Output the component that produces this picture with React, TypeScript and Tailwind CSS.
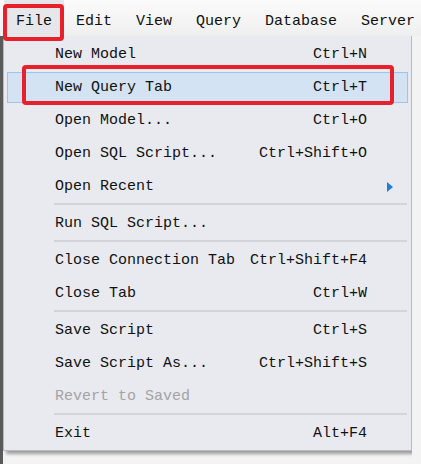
import { Fragment } from "react";

type Item = { label: string; shortcut?: string; disabled?: boolean; submenu?: boolean; active?: boolean };

const groups: Item[][] = [
  [
    { label: "New Model", shortcut: "Ctrl+N" },
    { label: "New Query Tab", shortcut: "Ctrl+T", active: true },
    { label: "Open Model...", shortcut: "Ctrl+O" },
    { label: "Open SQL Script...", shortcut: "Ctrl+Shift+O" },
    { label: "Open Recent", submenu: true },
  ],
  [{ label: "Run SQL Script..." }],
  [
    { label: "Close Connection Tab", shortcut: "Ctrl+Shift+F4" },
    { label: "Close Tab", shortcut: "Ctrl+W" },
  ],
  [
    { label: "Save Script", shortcut: "Ctrl+S" },
    { label: "Save Script As...", shortcut: "Ctrl+Shift+S" },
    { label: "Revert to Saved", disabled: true },
  ],
  [{ label: "Exit", shortcut: "Alt+F4" }],
];

const menus = ["File", "Edit", "View", "Query", "Database", "Server"];

const MenuRow = ({ item }: { item: Item }) => (
  <div className="relative h-[33px] flex items-center pt-[2px]">
    {item.active && (
      <>
        <div className="absolute left-[3px] right-[3px] top-[2px] bottom-0 bg-[#d3e3f3] border border-[#9cc5ee]" />
        <div className="absolute left-[18px] top-[-5px] w-[372px] h-[40px] border-[4px] border-[#e8202a] rounded-[4px]" />
      </>
    )}
    <span className={`relative pl-[51px] ${item.disabled ? "text-[#a3a3a3]" : "text-[#111]"}`}>{item.label}</span>
    {item.shortcut && (
      <span className="relative ml-auto mr-[44px] text-[#111]">{item.shortcut}</span>
    )}
    {item.submenu && (
      <svg className="relative ml-auto mr-[18px]" width="6" height="10" viewBox="0 0 6 10">
        <path d="M0 0 L6 5 L0 10 Z" fill="#1e7fd8" />
      </svg>
    )}
  </div>
);

const App = () => {
  return (
    <div
      className="w-[421px] h-[464px] bg-[#f3f3f3] overflow-hidden flex flex-col text-[15px] leading-none"
      style={{ fontFamily: '"Liberation Mono", "DejaVu Sans Mono", monospace' }}
    >
      {/* Menu bar */}
      <div className="h-[36px] flex items-center pl-[4px] bg-gradient-to-b from-[#fbfbfb] to-[#efefef]">
        {menus.map((m, i) => (
          <div
            key={m}
            className={`relative h-full flex items-center pt-[7px] px-[12px] text-[#111] ${i === 0 ? "bg-[#e6e7eb]" : ""}`}
          >
            {i === 0 && (
              <div className="absolute left-[-1px] top-[4px] w-[61px] h-[37px] border-[4px] border-[#e8202a] rounded-[4px] z-10" />
            )}
            <span className="relative">{m}</span>
          </div>
        ))}
      </div>

      <div className="flex flex-1">
        <div className="w-[3px] bg-[#5a5a5a]" />
        {/* Dropdown */}
        <div className="flex flex-col">
          <div className="w-[409px] h-[415px] bg-[#e9eaef] border border-[#b8b9bd] border-t-0 shadow-[3px_3px_3px_rgba(0,0,0,0.35)] flex flex-col pt-[1px]">
            {groups.map((g, gi) => (
              <Fragment key={gi}>
                {gi > 0 && (
                  <div className="h-[4px] flex items-center pl-[50px] pr-[4px]">
                    <div className="h-[2px] w-full bg-[#d3d4db]" />
                  </div>
                )}
                {g.map((item) => (
                  <MenuRow key={item.label} item={item} />
                ))}
              </Fragment>
            ))}
          </div>
        </div>
        <div className="flex-1 bg-[#f3f3f3]" />
      </div>
    </div>
  );
};

export default App;
